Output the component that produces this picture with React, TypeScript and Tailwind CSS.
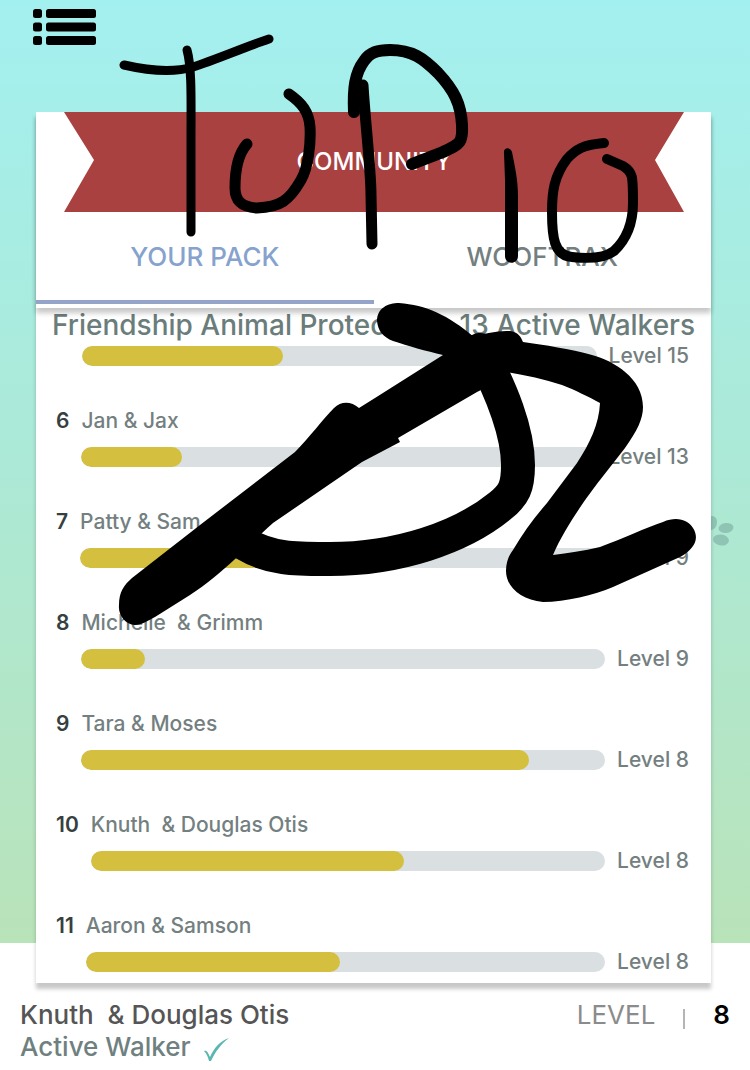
interface Walker {
  rank: string;
  name: string;
  level: number;
  progress: number;
}

const walkers: Walker[] = [
  { rank: "6", name: "Jan & Jax", level: 13, progress: 19.5 },
  { rank: "7", name: "Patty & Sam", level: 9, progress: 40 },
  { rank: "8", name: "Michelle  & Grimm", level: 9, progress: 12.2 },
  { rank: "9", name: "Tara & Moses", level: 8, progress: 85.5 },
  { rank: "10", name: "Knuth  & Douglas Otis", level: 8, progress: 61 },
  { rank: "11", name: "Aaron & Samson", level: 8, progress: 49 },
];

const LevelBar = ({ level, progress }: { level: number; progress: number }) => (
  <div className="flex h-5 items-center gap-3">
    <div className="h-5 flex-1 overflow-hidden rounded-full bg-[#dae0e2]">
      <div
        className="h-full rounded-full bg-[#d4c03e]"
        style={{ width: `${progress}%` }}
      />
    </div>
    <span className="text-[21px] font-medium whitespace-nowrap text-[#73807f]">
      Level {level}
    </span>
  </div>
);

const WalkerRow = ({ data }: { data: Walker }) => (
  <li className="flex gap-3 pt-[41px]">
    <span className="text-[21px] leading-7 font-semibold text-[#364040]">
      {data.rank}
    </span>
    <div className="flex-1">
      <p className="mb-3 text-[21px] leading-7 font-medium whitespace-pre text-[#73807f]">
        {data.name}
      </p>
      <LevelBar level={data.level} progress={data.progress} />
    </div>
  </li>
);

const MenuIcon = () => (
  <svg width="63" height="36" viewBox="0 0 63 36" aria-hidden="true">
    {[0, 13.5, 27].map((y) => (
      <g key={y}>
        <rect x="0" y={y} width="9" height="9" rx="2.5" />
        <rect x="13" y={y} width="50" height="9" rx="2.5" />
      </g>
    ))}
  </svg>
);

const Paw = () => (
  <svg
    className="absolute top-[514px] right-[13px]"
    width="34"
    height="36"
    viewBox="0 0 34 36"
    fill="#8fc4b4"
    aria-hidden="true">
    <ellipse cx="9" cy="9" rx="5" ry="7" transform="rotate(12 9 9)" />
    <ellipse cx="23" cy="14" rx="7.5" ry="5" transform="rotate(-8 23 14)" />
    <ellipse cx="18" cy="26" rx="8" ry="5.5" transform="rotate(8 18 26)" />
  </svg>
);

// Freehand marker drawn over the whole screen
const Scribble = () => (
  <svg
    className="pointer-events-none absolute top-0 left-0 z-20 w-full"
    viewBox="0 0 750 1070"
    aria-hidden="true">
    <g
      fill="none"
      stroke="#000"
      strokeWidth="9"
      strokeLinecap="round"
      strokeLinejoin="round">
      <path d="M124 65C150 71 173 73 193 67C215 60 245 47 269 39" />
      <path d="M187 50C192 68 191 100 191 140L191 232" />
      <path
        strokeWidth="11"
        d="M289 94C302 103 309 112 310 127C311 145 308 168 301 180C289 201 280 207 257 208C242 207 235 201 235 188C235 168 238 154 247 144"
      />
      <path
        strokeWidth="12"
        d="M354 112C353 88 355 73 364 61C370 52 378 50 390 50C412 50 423 58 438 73C454 90 461 104 462 125C463 143 460 144 443 152L412 164"
      />
      <path strokeWidth="11" d="M363 85C365 120 371 170 371 195L372 244" />
      <path
        strokeWidth="10"
        d="M604 143C583 145 576 149 567 159C554 176 552 192 552 212C552 237 554 256 572 257C590 259 605 258 614 251C628 238 633 222 633 203C633 176 633 172 623 166L607 159"
      />
      <path
        strokeWidth="34"
        d="M480 350C501 390 518 430 518 465C518 487 514 495 500 506C462 537 398 560 325 559C296 559 270 559 245 544"
      />
    </g>
    <path d="M504 153C503 147 511 147 512 152C515 167 518 180 518 196L518 256C518 265 505 265 505 256L505 180Z" />
    <path d="M377 321C377 308 388 303 399 303C426 305 448 315 474 337C487 332 501 331 510 331C518 332 521 337 523 342C545 345 570 349 592 355C614 361 643 378 643 407C643 419 637 431 625 448L600 480C586 498 564 529 553 555C568 553 583 551 600 547C622 539 647 527 663 522C677 516 688 520 693 528C700 539 694 549 680 557L613 587C594 595 566 602 543 602C521 600 506 587 506 571C506 562 509 555 513 550C523 533 534 518 547 503L577 463C590 443 599 424 600 403C589 397 575 390 562 385C544 379 525 375 507 372L485 388L477 392L398 438L400 442L362 462L273 523C258 536 246 550 234 560C222 571 207 584 190 595L155 617C147 621 142 625 135 625C125 624 118 615 119 605C119 592 124 585 132 578L200 525L295 452C309 438 323 419 334 408C341 401 351 401 359 408L375 398L443 355C426 351 408 346 393 341C383 337 378 331 377 321Z" />
  </svg>
);

const CheckMark = () => (
  <svg width="26" height="26" viewBox="0 0 26 26" fill="#58b7ae" aria-hidden="true">
    <path d="M1 14C4 13 5 16 7 20C11 11 17 4 26 1C18 7 12 15 8 24L6 24C5 20 4 17 1 14Z" />
  </svg>
);

export default function App() {
  return (
    <div className="relative bg-white font-[Inter,'Liberation_Sans',sans-serif]">
      <main className="relative flex flex-col bg-linear-to-b from-[#a3f0f0] via-[#ace9d6] to-[#b9e3b9]">
        <header className="h-28 px-[33px] pt-[9px]">
          <button type="button" aria-label="Menu" className="block">
            <MenuIcon />
          </button>
        </header>
        <Paw />

        <section className="relative mr-[39px] mb-[-40px] ml-9 bg-white pb-[11px] shadow-[0_6px_4px_rgba(0,0,0,0.22)]">
          <div className="relative z-10 bg-white shadow-[0_5px_5px_rgba(0,0,0,0.22)]">
            <h1 className="mr-[27px] ml-7 flex h-[100px] items-center justify-center bg-[#a94140] text-2xl font-medium text-white [clip-path:polygon(0_0,100%_0,calc(100%-29px)_48%,100%_100%,0_100%,30px_48%)]">
              COMMUNITY
            </h1>
            <div role="tablist" className="flex pb-1">
              <button
                type="button"
                role="tab"
                aria-selected="true"
                className="h-[92px] flex-1 border-b-4 border-[#94a3c8] text-[26px] font-medium text-[#86a2cd]">
                YOUR PACK
              </button>
              <button
                type="button"
                role="tab"
                aria-selected="false"
                className="h-[92px] flex-1 border-b-4 border-transparent text-[26px] font-medium text-[#73807f]">
                WOOFTRAX
              </button>
            </div>
          </div>

          <h2 className="flex h-[38px] justify-between px-4 text-[28px] leading-[34px] font-medium whitespace-nowrap text-[#6b7d7b]">
            <span>Friendship Animal Protec</span>
            <span>13 Active Walkers</span>
          </h2>
          <div className="pr-[22px] pl-[46px]">
            <LevelBar level={15} progress={39} />
          </div>
          <ul className="pr-[22px] pl-5">
            {walkers.map((walker) => (
              <WalkerRow key={walker.rank} data={walker} />
            ))}
          </ul>
        </section>
      </main>

      <footer className="flex items-start justify-between px-5 pt-14 pb-2 text-[26px] leading-8 font-medium">
        <div>
          <p className="whitespace-pre text-[#555]">Knuth  & Douglas Otis</p>
          <p className="flex items-end gap-3 text-[#6f8080]">
            Active Walker <CheckMark />
          </p>
        </div>
        <div className="flex items-center">
          <span className="font-normal text-[#8b8b8b]">LEVEL</span>
          <span className="mt-2 mr-7 ml-7 h-5 w-0.5 bg-[#b5b5b5]" />
          <span className="font-semibold text-black">8</span>
        </div>
      </footer>
      <Scribble />
    </div>
  );
}
